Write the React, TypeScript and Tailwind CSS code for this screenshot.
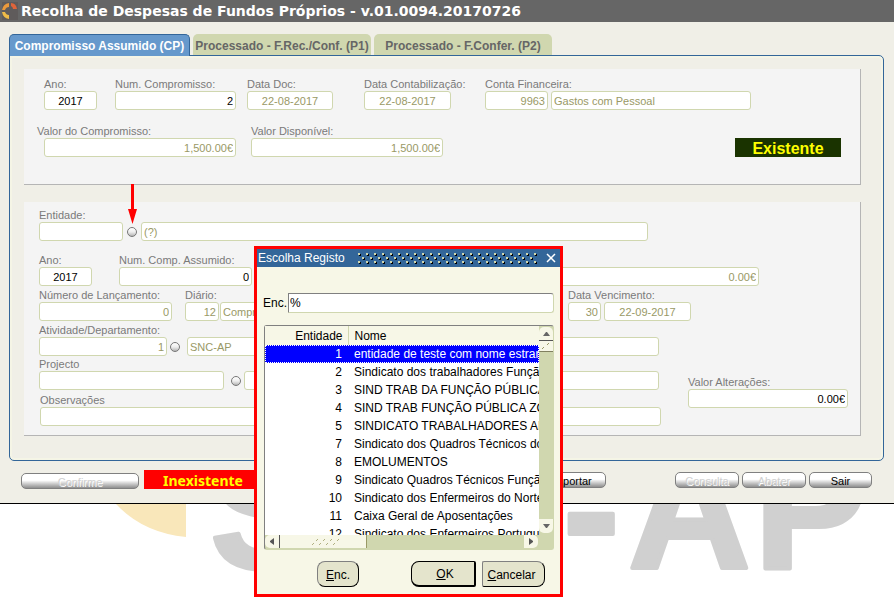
import type { ReactNode } from 'react';

type Align = 'left' | 'center' | 'right';

const alignClass: Record<Align, string> = {
  left: 'text-left',
  center: 'text-center',
  right: 'text-right',
};

interface BoxProps {
  id: string;
  value?: string;
  width: string;
  align?: Align;
  active?: boolean;
  name?: string;
}

function Box({ id, value = '', width, align = 'right', active = false, name }: BoxProps) {
  return (
    <input
      id={id}
      aria-label={name}
      defaultValue={value}
      readOnly={!active}
      className={`block h-[19px] shrink-0 rounded-[3px] border border-[#d0d7af] bg-white px-[2px] text-[11px] leading-4 outline-none ${
        active ? 'text-black' : 'text-[#999966]'
      } ${alignClass[align]} ${width}`}
    />
  );
}

function Field({ label, id, className = '', labelClass = '', children }: { label: string; id: string; className?: string; labelClass?: string; children: ReactNode }) {
  return (
    <div className={`flex shrink-0 flex-col ${className}`}>
      <label htmlFor={id} className={`h-[13px] w-0 text-[11px] leading-[13px] whitespace-nowrap text-[#7a7a7a] ${labelClass}`}>
        {label}
      </label>
      <div className="flex items-center">{children}</div>
    </div>
  );
}

function Picker({ name, className, children }: { name: string; className: string; children?: ReactNode }) {
  return (
    <div className={`relative shrink-0 ${className}`}>
      <button
        type="button"
        aria-label={name}
        className="block size-[10px] rounded-full border border-[#777777] bg-linear-to-b from-white via-[#eeeeee] to-[#b5b5b5]"
      />
      {children}
    </div>
  );
}

function BarButton({ children, width, disabled = false }: { children: string; width: string; disabled?: boolean }) {
  return (
    <button
      type="button"
      disabled={disabled}
      className={`h-4 rounded-[5px] border border-[#808080] bg-linear-to-b from-white from-45% to-[#8f8f8f] text-[11px] leading-[17px] text-black disabled:text-[#d0d0d0] disabled:[text-shadow:1px_1px_0_#ffffff] ${width}`}
    >
      {children}
    </button>
  );
}

const rows: [string, string][] = [
  ['1', 'entidade de teste com nome estranho'],
  ['2', 'Sindicato dos trabalhadores Função Pública'],
  ['3', 'SIND TRAB DA FUNÇÃO PÚBLICA DO SUL'],
  ['4', 'SIND TRAB FUNÇÃO PÚBLICA ZONA CENTRO'],
  ['5', 'SINDICATO TRABALHADORES ADMINISTRAÇÃO'],
  ['7', 'Sindicato dos Quadros Técnicos do Estado'],
  ['8', 'EMOLUMENTOS'],
  ['9', 'Sindicato Quadros Técnicos Função Pública'],
  ['10', 'Sindicato dos Enfermeiros do Norte'],
  ['11', 'Caixa Geral de Aposentações'],
  ['12', 'Sindicato dos Enfermeiros Portugueses'],
];

function TitleBar() {
  return (
    <header className="flex h-[22px] items-center bg-[#666666] pl-[2px]">
      <svg width="16" height="18" viewBox="0 0 16 18" aria-hidden="true">
        <rect width="16" height="18" fill="#5f5b5b" />
        <path d="M7 1v4Q4 5 3 8H0Q1 2 7 1" fill="#eb9a3c" />
        <path d="M9 1q5 0 6 6h-4Q11 5 9 4z" fill="#e0643a" />
        <path d="M0 10h3q1 3 4 3v4Q1 16 0 10" fill="#eebb48" />
      </svg>
      <h1 className="ml-[3px] font-['DejaVu_Sans',sans-serif] text-[14px] leading-[24px] font-bold whitespace-nowrap text-white">
        Recolha de Despesas de Fundos Próprios - v.01.0094.20170726
      </h1>
    </header>
  );
}

function Tabs() {
  return (
    <nav role="tablist" className="flex pt-3 text-[12px] leading-[22px] font-bold whitespace-nowrap">
      <button role="tab" aria-selected="true" type="button" className="relative z-10 -mb-px h-[22px] w-[181px] rounded-t-[5px] border border-b-0 border-[#336699] bg-[#6699cc] text-white">
        Compromisso Assumido (CP)
      </button>
      <button role="tab" aria-selected="false" type="button" className="ml-[3px] h-[21px] w-[178px] rounded-t-[5px] bg-[#d0d7af] pt-px text-[#666666]">
        Processado - F.Rec./Conf. (P1)
      </button>
      <button role="tab" aria-selected="false" type="button" className="ml-[3px] h-[21px] w-[178px] rounded-t-[5px] bg-[#d0d7af] pt-px text-[#666666]">
        Processado - F.Confer. (P2)
      </button>
    </nav>
  );
}

function Commitment() {
  return (
    <section className="border-r border-b border-[#b5b5b5] bg-[#f4f4f4] pt-[9px] pr-[19px] pb-[27px] pl-5">
      <div className="flex">
        <Field label="Ano:" id="ano"><Box id="ano" value="2017" width="w-[53px]" align="center" active /></Field>
        <Field label="Num. Compromisso:" id="num" className="ml-[18px]"><Box id="num" value="2" width="w-[121px]" active /></Field>
        <Field label="Data Doc:" id="doc" className="ml-[11px]"><Box id="doc" value="22-08-2017" width="w-[86px]" align="center" /></Field>
        <Field label="Data Contabilização:" id="cont" className="ml-[31px]"><Box id="cont" value="22-08-2017" width="w-[87px]" align="center" /></Field>
        <Field label="Conta Financeira:" id="conta" className="ml-[34px]">
          <div className="flex gap-[3px]">
            <Box id="conta" value="9963" width="w-[63px]" />
            <Box id="contaNome" name="Nome da conta" value="Gastos com Pessoal" width="w-[200px]" align="left" />
          </div>
        </Field>
      </div>
      <div className="mt-[15px] flex items-end">
        <Field label="Valor do Compromisso:" id="valor" labelClass="-ml-[7px]"><Box id="valor" value="1,500.00€" width="w-[192px]" /></Field>
        <Field label="Valor Disponível:" id="disp" className="ml-[15px]"><Box id="disp" value="1,500.00€" width="w-[192px]" /></Field>
        <output className="ml-auto h-[19px] w-[106px] bg-[#1a3300] text-center text-[16px] leading-[21px] font-bold text-[#ffff00]">Existente</output>
      </div>
    </section>
  );
}

function Details() {
  return (
    <section className="mt-[17px] border-r border-b border-[#b5b5b5] bg-[#f4f4f4] pt-[7px] pr-3 pb-[9px] pl-[15px]">
      <Field label="Entidade:" id="ent">
        <Box id="ent" width="w-[84px]" align="left" />
        <Picker name="Escolher entidade" className="mx-1">
          <svg className="absolute bottom-full left-[1px]" width="9" height="43" viewBox="0 0 9 43" aria-hidden="true">
            <path d="M3 0h3v25h3L4.500 40 0 25h3z" fill="#ff0000" />
          </svg>
        </Picker>
        <Box id="entNome" name="Nome da entidade" value="(?)" width="w-[507px]" align="left" />
      </Field>
      <div className="mt-[13px] flex items-end">
        <Field label="Ano:" id="ano2"><Box id="ano2" value="2017" width="w-[53px]" align="center" active /></Field>
        <Field label="Num. Comp. Assumido:" id="assumido" className="ml-[27px]"><Box id="assumido" value="0" width="w-[133px]" active /></Field>
        <div className="ml-[18px]"><Box id="total" name="Valor" value="0.00€" width="w-[489px]" /></div>
      </div>
      <div className="mt-[3px] flex">
        <Field label="Número de Lançamento:" id="lanc"><Box id="lanc" value="0" width="w-[133px]" /></Field>
        <Field label="Diário:" id="diario" className="ml-[13px]">
          <div className="flex gap-px">
            <Box id="diario" value="12" width="w-[34px]" />
            <Box id="diarioNome" name="Nome do diário" value="Compromissos" width="w-[336px]" align="left" />
          </div>
        </Field>
        <Field label="Data Vencimento:" id="dias" className="ml-3">
          <div className="flex gap-[3px]">
            <Box id="dias" value="30" width="w-[33px]" />
            <Box id="venc" name="Vencimento" value="22-09-2017" width="w-[87px]" align="center" />
          </div>
        </Field>
      </div>
      <Field label="Atividade/Departamento:" id="ativ" className="mt-[3px]">
        <Box id="ativ" value="1" width="w-[128px]" />
        <Picker name="Escolher atividade" className="mr-[7px] ml-[3px]" />
        <Box id="ativNome" name="Nome da atividade" value="SNC-AP" width="w-[472px]" align="left" />
      </Field>
      <div className="flex items-end justify-between">
        <div className="mt-[2px]">
          <Field label="Projecto" id="proj">
            <Box id="proj" width="w-[185px]" align="left" />
            <Picker name="Escolher projecto" className="mr-[3px] ml-[7px]" />
            <Box id="projNome" name="Nome do projecto" width="w-[415px]" align="left" />
          </Field>
          <Field label="Observações" id="obs" className="mt-1 ml-px"><Box id="obs" width="w-[621px]" align="left" /></Field>
        </div>
        <Field label="Valor Alterações:" id="alt" className="mb-[18px]"><Box id="alt" value="0.00€" width="w-[160px]" active /></Field>
      </div>
    </section>
  );
}

function Dialog() {
  return (
    <div role="dialog" aria-label="Escolha Registo" className="absolute top-[246px] left-[254px] z-20 w-[309px] border-[3px] border-[#ff0000] bg-[#f7f7e7] pb-[7px] text-[12px] text-black">
      <div className="flex h-[18px] items-center bg-[#336699] pr-1 pl-px text-white">
        <h2 className="w-[100px] text-[12px] leading-[18px]">Escolha Registo</h2>
        <svg width="180" height="11" aria-hidden="true">
          <defs>
            <pattern id="grip" width="8" height="8" patternUnits="userSpaceOnUse">
              <path d="M1 1h2v2H1zM5 5h2v2H5z" fill="#000000" />
              <path d="M0 0h2v2H0zM4 4h2v2H4z" fill="#d0d7af" />
            </pattern>
          </defs>
          <rect width="180" height="11" fill="url(#grip)" />
        </svg>
        <button type="button" aria-label="Fechar" className="ml-auto">
          <svg width="10" height="10" viewBox="0 0 10 10" aria-hidden="true">
            <path d="M1 1l8 8M9 1L1 9" stroke="#ffffff" strokeWidth="1.500" />
          </svg>
        </button>
      </div>
      <div className="mt-[26px] flex items-center pr-[6px] pl-[6px]">
        <label htmlFor="find" className="w-[25px] leading-5">Enc.</label>
        <input id="find" defaultValue="%" className="h-[20px] min-w-0 flex-1 rounded-r-[3px] border border-t-[#808080] border-r-[#d0d7af] border-b-[#d0d7af] border-l-[#808080] bg-white px-px outline-none" />
      </div>
      <div className="mr-[6px] ml-[7px] mt-3 h-[225px] rounded-[3px] border border-t-[#808080] border-r-[#d0d7af] border-b-[#d0d7af] border-l-[#808080] bg-[#d0d7af]">
        <div className="flex h-[209px]">
          <div className="min-w-0 flex-1 overflow-hidden bg-white">
            <table className="w-full table-fixed border-collapse whitespace-nowrap">
              <thead>
                <tr className="h-[19px] bg-[#f7f7e7]">
                  <th className="w-[83px] border-r border-[#d0d7af] p-0 pr-[5px] text-right leading-[18px] font-normal">Entidade</th>
                  <th className="p-0 pl-[6px] text-left leading-[18px] font-normal">Nome</th>
                </tr>
              </thead>
              <tbody>
                {rows.map(([code, name], i) => (
                  <tr key={code} className={i === 0 ? 'h-[18px] bg-[#0000ff] text-white outline-1 -outline-offset-1 outline-white outline-dotted' : 'h-[18px]'}>
                    <td className="p-0 pr-[6px] text-right leading-[18px]">{code}</td>
                    <td className="overflow-hidden p-0 pl-[6px] leading-[18px]">{name}</td>
                  </tr>
                ))}
              </tbody>
            </table>
          </div>
          <div className="flex w-[14px] flex-col">
            <button type="button" aria-label="Subir" className="mt-px h-[14px] rounded-t-[5px] border-b border-[#555555] bg-[#f7f7e7]">
              <svg className="mx-auto" width="7" height="4" aria-hidden="true"><path d="M0 4l3-4h1l3 4z" fill="#666666" /></svg>
            </button>
            <div className="h-[11px] border-b border-[#808060] bg-[#f7f7e7]">
              <svg width="14" height="10" aria-hidden="true"><path d="M3 8l2-2M8 4l2-2" stroke="#999966" /></svg>
            </div>
            <button type="button" aria-label="Descer" className="mt-auto mb-[2px] h-[14px] rounded-b-[5px] bg-[#f7f7e7]">
              <svg className="mx-auto" width="7" height="4" aria-hidden="true"><path d="M0 0h7L4 4H3z" fill="#666666" /></svg>
            </button>
          </div>
        </div>
        <div className="flex h-[13px]">
          <button type="button" aria-label="Esquerda" className="w-[15px] rounded-l-[5px] border-r border-[#555555] bg-[#f7f7e7]">
            <svg className="mx-auto" width="4" height="7" aria-hidden="true"><path d="M4 0v7L0 4V3z" fill="#555555" /></svg>
          </button>
          <div className="w-[87px] border-r border-[#999966] bg-[#f7f7e7]">
            <svg className="ml-[30px]" width="30" height="13" aria-hidden="true">
              <path d="M2 10l2-2M6 6l2-2M9 10l2-2M13 6l2-2M16 10l2-2M20 6l2-2M23 10l2-2M27 6l2-2" stroke="#b0b080" />
            </svg>
          </div>
          <button type="button" aria-label="Direita" className="mr-[15px] ml-auto w-[14px] rounded-r-[5px] bg-[#f7f7e7]">
            <svg className="mx-auto" width="4" height="7" aria-hidden="true"><path d="M0 0v7l4-3V3z" fill="#555555" /></svg>
          </button>
        </div>
      </div>
      <div className="mt-[11px] flex pr-[15px] pl-[60px]">
        <button type="button" className="h-[26px] w-[42px] rounded-[8px] border border-t-[#808080] border-r-black border-b-black border-l-[#808080] bg-[#e4e4cc] pt-px"><u>E</u>nc.</button>
        <button type="button" className="ml-[52px] h-[26px] w-[65px] rounded-l-[8px] rounded-r-[2px] border border-r-2 border-b-2 border-black bg-[#e4e4cc] pt-px pl-1"><u>O</u>K</button>
        <button type="button" className="ml-[6px] h-[26px] w-[63px] rounded-l-[2px] rounded-r-[8px] border border-t-[#808080] border-r-black border-b-black border-l-[#808080] bg-[#e4e4cc] pt-px pr-1"><u>C</u>ancelar</button>
      </div>
    </div>
  );
}

function Backdrop() {
  return (
    <svg aria-hidden="true" className="pointer-events-none absolute top-[420px] left-[86px] z-0" width="808" height="177" viewBox="0 0 808 177">
      <path d="M4 40Q30 110 100 117V0H4z" fill="#f9e7ba" />
      <text
        x="124 236 350 477 542 668"
        y="148"
        fill="#d0d0d0"
        stroke="#d0d0d0"
        strokeWidth="4"
        strokeLinejoin="round"
        className="text-[170px] font-bold"
      >
        SNC-AP
      </text>
    </svg>
  );
}

export default function App() {
  return (
    <div className="relative min-h-screen overflow-hidden bg-white font-['Liberation_Sans',Arial,sans-serif]">
      <Backdrop />
      <main className="relative z-10 border-b border-black bg-[#f0efe7]">
        <TitleBar />
        <div className="pr-[10px] pl-[9px]">
          <Tabs />
          <div className="rounded-[5px] rounded-tl-none border border-[#336699] bg-[#f0efe7] pt-[13px] pr-[22px] pb-6 pl-[14px] shadow-[inset_0_0_0_2px_#f5f5e6]">
            <Commitment />
            <Details />
          </div>
        </div>
        <footer className="flex h-[42px] items-start pt-[11px] pr-[22px] pl-[21px]">
          <BarButton width="w-[118px] mt-px" disabled>Confirme</BarButton>
          <output className="-mt-[2px] ml-[5px] h-[19px] w-[118px] bg-[#ff0000] text-center font-['Noto_Sans',sans-serif] text-[14px] leading-[21px] font-bold text-[#ffff00]">Inexistente</output>
          <div className="ml-[274px]"><BarButton width="w-[70px] block">Exportar</BarButton></div>
          <div className="ml-auto flex gap-[3px]">
            <BarButton width="w-[64px]" disabled>Consulta</BarButton>
            <BarButton width="w-[64px]" disabled>Abater</BarButton>
            <BarButton width="w-[63px]">Sair</BarButton>
          </div>
        </footer>
      </main>
      <Dialog />
    </div>
  );
}
